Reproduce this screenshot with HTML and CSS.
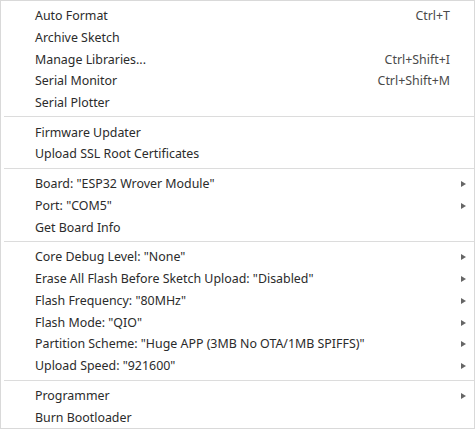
FILE: index.html
```html
<!DOCTYPE html>
<html>
<head>
<meta charset="utf-8">
<link rel="stylesheet" href="styles.css">
</head>
<body>
<div class="menu">
  <div class="item"><span class="label">Auto Format</span><span class="key">Ctrl+T</span><span class="sub"></span></div>
  <div class="item"><span class="label">Archive Sketch</span><span class="key"></span><span class="sub"></span></div>
  <div class="item"><span class="label">Manage Libraries...</span><span class="key">Ctrl+Shift+I</span><span class="sub"></span></div>
  <div class="item"><span class="label">Serial Monitor</span><span class="key">Ctrl+Shift+M</span><span class="sub"></span></div>
  <div class="item"><span class="label">Serial Plotter</span><span class="key"></span><span class="sub"></span></div>
  <div class="sep"></div>
  <div class="item"><span class="label">Firmware Updater</span><span class="key"></span><span class="sub"></span></div>
  <div class="item"><span class="label">Upload SSL Root Certificates</span><span class="key"></span><span class="sub"></span></div>
  <div class="sep"></div>
  <div class="item"><span class="label">Board: "ESP32 Wrover Module"</span><span class="key"></span><span class="sub arrow"></span></div>
  <div class="item"><span class="label">Port: "COM5"</span><span class="key"></span><span class="sub arrow"></span></div>
  <div class="item"><span class="label">Get Board Info</span><span class="key"></span><span class="sub"></span></div>
  <div class="sep"></div>
  <div class="item"><span class="label">Core Debug Level: "None"</span><span class="key"></span><span class="sub arrow"></span></div>
  <div class="item"><span class="label">Erase All Flash Before Sketch Upload: "Disabled"</span><span class="key"></span><span class="sub arrow"></span></div>
  <div class="item"><span class="label">Flash Frequency: "80MHz"</span><span class="key"></span><span class="sub arrow"></span></div>
  <div class="item"><span class="label">Flash Mode: "QIO"</span><span class="key"></span><span class="sub arrow"></span></div>
  <div class="item"><span class="label">Partition Scheme: "Huge APP (3MB No OTA/1MB SPIFFS)"</span><span class="key"></span><span class="sub arrow"></span></div>
  <div class="item"><span class="label">Upload Speed: "921600"</span><span class="key"></span><span class="sub arrow"></span></div>
  <div class="sep"></div>
  <div class="item"><span class="label">Programmer</span><span class="key"></span><span class="sub arrow"></span></div>
  <div class="item"><span class="label">Burn Bootloader</span><span class="key"></span><span class="sub"></span></div>
</div>
</body>
</html>
```
FILE: styles.css
```css
html, body {
  margin: 0;
  padding: 0;
  background: #ffffff;
}
.menu {
  box-sizing: border-box;
  width: 475px;
  height: 429px;
  border: 1px solid #d9d9d9;
  background: #ffffff;
  padding-top: 4px;
  font-family: "Noto Sans", "Open Sans", sans-serif;
  font-size: 12.4px;
  color: #2b2b2b;
}
.item {
  display: grid;
  grid-template-columns: 1fr auto 5px;
  column-gap: 11px;
  align-items: center;
  height: 21.75px;
  line-height: 21.75px;
  padding-left: 34px;
  padding-right: 8px;
}
.label {
  white-space: nowrap;
}
.key {
  color: #4a4a4a;
  white-space: nowrap;
}
.sub {
  width: 5px;
  height: 7px;
}
.arrow {
  width: 0;
  height: 0;
  border-top: 3.5px solid transparent;
  border-bottom: 3.5px solid transparent;
  border-left: 5px solid #666666;
}
.sep {
  height: 1px;
  background: #dcdcdc;
  margin: 2.6px 0 4.4px 3px;
}
```
